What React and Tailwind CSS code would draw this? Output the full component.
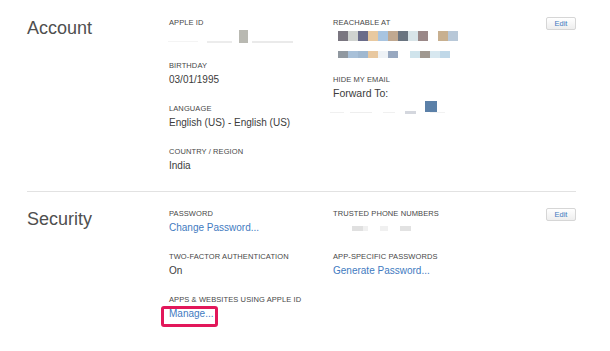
const font = { fontFamily: '"Liberation Sans", Arial, sans-serif' };

const Label = ({ children }) => (
  <div className="text-[7.5px] leading-[10px] uppercase tracking-[0.1px] text-[#474747] whitespace-nowrap">
    {children}
  </div>
);

const Value = ({ children, link }) => (
  <div
    className={`mt-[2px] text-[10px] leading-[14px] whitespace-nowrap ${
      link ? "text-[#3f7bbf]" : "text-[#3c3c3c]"
    }`}
  >
    {children}
  </div>
);

const EditButton = () => (
  <button className="-mt-[1px] ml-auto h-[13px] w-[30px] rounded-[2px] border border-[#d6d6d6] bg-gradient-to-b from-white to-[#eeeeee] text-[7.5px] leading-[11px] text-[#3f7bbf]">
    Edit
  </button>
);

const reach1 = ["#7a7680", "#d0d3d0", "#6a6c8a", "#e8c9a0", "#a8c4e0", "#c0a890", "#6a7480", "#d8e4e8", "#9a8888"];
const reach2 = ["#9098a0", "#a8c0d8", "#a0b8d0", "#e8c8a0", "#eef2f6", "#98a8c0"];
const reach3 = ["#d0e4ec", "#a09890", "#d8e8f0", "#c0d8e8"];

const Blocks = ({ colors, h }) => (
  <div className="flex">
    {colors.map((c, i) => (
      <div key={i} className={`w-[10px] ${h}`} style={{ background: c }} />
    ))}
  </div>
);

export default function App() {
  return (
    <div className="w-[610px] h-[351px] bg-white overflow-hidden" style={font}>
      <div className="ml-[27px] mr-[34px]">
        {/* Account */}
        <section className="flex pt-[18px] pb-[18px] border-b border-[#e2e2e2]">
          <h2 className="w-[142px] text-[18px] leading-[20px] text-[#4f4f4f]">Account</h2>
          <div className="w-[164px] flex flex-col gap-[17px]">
            <div>
              <Label>Apple ID</Label>
              <div className="mt-[2px] h-[14px] relative">
                <div className="absolute left-[-1px] top-[11px] h-[1px] w-[30px] bg-[#f4f4f4]" />
                <div className="absolute left-[38px] top-[11px] h-[2px] w-[25px] bg-[#ececec]" />
                <div className="absolute left-[70px] top-0 h-[13px] w-[9px] bg-[#b9b9b2]" />
                <div className="absolute left-[83px] top-[11px] h-[2px] w-[41px] bg-[#eaeaea]" />
              </div>
            </div>
            <div>
              <Label>Birthday</Label>
              <Value>03/01/1995</Value>
            </div>
            <div>
              <Label>Language</Label>
              <Value>English (US) - English (US)</Value>
            </div>
            <div>
              <Label>Country / Region</Label>
              <Value>India</Value>
            </div>
          </div>
          <div className="flex flex-col gap-[17px]">
            <div>
              <Label>Reachable At</Label>
              <div className="mt-[3px] flex pl-[5px]">
                <Blocks colors={reach1} h="h-[10px]" />
                <div className="w-[10px]" />
                <Blocks colors={["#c8b090", "#b8c8d8"]} h="h-[10px]" />
              </div>
              <div className="mt-[10px] flex pl-[5px]">
                <Blocks colors={reach2} h="h-[7px]" />
                <div className="w-[12px]" />
                <Blocks colors={reach3} h="h-[7px]" />
              </div>
            </div>
            <div>
              <Label>Hide My Email</Label>
              <div className="mt-[1px] text-[10.5px] leading-[14px] text-[#3c3c3c]">Forward To:</div>
              <div className="relative h-[14px]">
                <div className="absolute left-[92px] top-[1px] h-[11px] w-[12px] bg-[#5b80a8]" />
                <div className="absolute left-[-3px] top-[12px] h-[1px] w-[14px] bg-[#f0f0f0]" />
                <div className="absolute left-[17px] top-[12px] h-[1px] w-[22px] bg-[#eeeeee]" />
                <div className="absolute left-[50px] top-[12px] h-[1px] w-[12px] bg-[#f0f0f0]" />
                <div className="absolute left-[72px] top-[11px] h-[3px] w-[11px] bg-[#d4d7de]" />
                <div className="absolute left-[97px] top-[12px] h-[1px] w-[15px] bg-[#f2f2f2]" />
              </div>
            </div>
          </div>
          <EditButton />
        </section>

        {/* Security */}
        <section className="flex pt-[17px]">
          <h2 className="w-[142px] text-[18px] leading-[20px] text-[#4f4f4f]">Security</h2>
          <div className="w-[164px] flex flex-col gap-[17px]">
            <div>
              <Label>Password</Label>
              <Value link>Change Password...</Value>
            </div>
            <div>
              <Label>Two-Factor Authentication</Label>
              <Value>On</Value>
            </div>
            <div>
              <Label>Apps &amp; Websites Using Apple ID</Label>
              <div className="relative">
                <Value link>Manage...</Value>
                <div className="absolute left-[-8px] top-[-1px] h-[21px] w-[57px] rounded-[3px] border-[3px] border-[#e2175a]" />
              </div>
            </div>
          </div>
          <div className="flex flex-col gap-[17px]">
            <div>
              <Label>Trusted Phone Numbers</Label>
              <div className="mt-[2px] h-[14px] flex items-center pl-[19px]">
                <div className="h-[5px] w-[11px] bg-[#e0e0e0]" />
                <div className="h-[5px] w-[5px] bg-[#f0f0f0]" />
                <div className="ml-[12px] h-[5px] w-[8px] bg-[#f0f0f0]" />
                <div className="ml-[12px] h-[5px] w-[11px] bg-[#e2e2e2]" />
              </div>
            </div>
            <div>
              <Label>App-Specific Passwords</Label>
              <Value link>Generate Password...</Value>
            </div>
          </div>
          <EditButton />
        </section>
      </div>
    </div>
  );
}
